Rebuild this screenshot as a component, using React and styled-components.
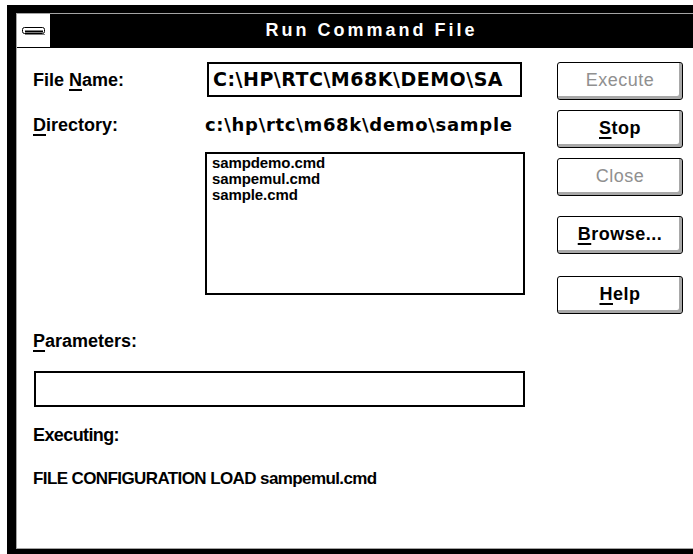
import React from "react";
import styled, { createGlobalStyle } from "styled-components";

const GlobalStyle = createGlobalStyle`
  html, body {
    margin: 0;
    padding: 0;
    background: #fff;
    overflow: hidden;
  }
  body {
    font-family: "Liberation Sans", Arial, sans-serif;
    font-weight: bold;
    color: #000;
  }
`;

const pathFont = `"DejaVu Sans", "Liberation Sans", sans-serif`;

const Frame = styled.div`
  margin: 5px 0 0 7px;
  width: 710px;
  background: #000;
  padding: 8px 9px 9px 9px;
`;

const Panel = styled.div`
  border: 1px solid #a4a4a4;
  background: #fff;
`;

const TitleBar = styled.div`
  display: flex;
  height: 33px;
  background: #000;
  border-bottom: 1px solid #000;
`;

const SysMenu = styled.div`
  width: 33px;
  background: #fff;
  display: flex;
  align-items: center;
  justify-content: center;
`;

const Title = styled.div`
  flex: 1;
  color: #fff;
  font-size: 18px;
  letter-spacing: 3px;
  line-height: 33px;
  padding-right: 32px;
  text-align: center;
`;

const Client = styled.div`
  display: flex;
  height: 500px;
`;

const LeftPane = styled.div`
  width: 508px;
  padding-left: 16px;
  box-sizing: border-box;
  display: flex;
  flex-direction: column;
`;

const Row = styled.div`
  display: flex;
  align-items: center;
  margin-top: ${(p) => p.$top}px;
  height: ${(p) => p.$h || 20}px;
`;

const Label = styled.div`
  font-size: ${(p) => p.$size || 18}px;
  line-height: 20px;
  width: ${(p) => p.$w || "auto"};
  letter-spacing: ${(p) => p.$ls || 0}px;
  flex: none;
  white-space: nowrap;
  margin-top: ${(p) => p.$top || 0}px;
`;

const PathText = styled.div`
  font-family: ${pathFont};
  font-size: 18px;
  line-height: 20px;
  letter-spacing: 0.7px;
  white-space: nowrap;
`;

const Key = styled.span`
  text-decoration: underline;
  text-underline-offset: 3px;
  text-decoration-thickness: 2px;
`;

const TextBox = styled.div`
  box-sizing: border-box;
  width: ${(p) => p.$w}px;
  height: ${(p) => p.$h}px;
  margin-top: ${(p) => p.$top || 0}px;
  margin-left: ${(p) => p.$left || 0}px;
  border: 2px solid #000;
  padding: 0 4px;
  font-family: ${pathFont};
  font-size: 19px;
  line-height: ${(p) => p.$h - 4}px;
  letter-spacing: 0.5px;
  white-space: nowrap;
  overflow: hidden;
`;

const ListBox = styled.div`
  box-sizing: border-box;
  width: 320px;
  height: 143px;
  margin: 17px 0 0 172px;
  border: 2px solid #000;
  padding: 1px 5px;
`;

const Item = styled.div`
  font-size: 15px;
  line-height: 16px;
  letter-spacing: -0.1px;
`;

const ButtonColumn = styled.div`
  margin-left: 32px;
  padding-top: 14px;
  display: flex;
  flex-direction: column;
  width: 126px;
`;

const Button = styled.div`
  box-sizing: border-box;
  height: 38px;
  margin-top: ${(p) => p.$top || 0}px;
  border: 1px solid #000;
  border-radius: 3px;
  background: #fff;
  box-shadow: inset -3px -3px 0 #a8a8a8, inset 2px 2px 0 #fff;
  display: flex;
  align-items: center;
  justify-content: center;
  font-size: 18px;
  color: ${(p) => (p.$disabled ? "#909090" : "#000")};
  font-weight: ${(p) => (p.$disabled ? "normal" : "bold")};
  letter-spacing: 0.5px;
  padding-bottom: 2px;
`;

function SysMenuIcon() {
  return (
    <svg width="24" height="8" viewBox="0 0 24 8">
      <rect x="0.5" y="0.5" width="22" height="6" rx="2" fill="#fff" stroke="#000" />
      <line x1="3" y1="4.5" x2="21" y2="4.5" stroke="#000" strokeWidth="2" />
      <line x1="3" y1="7.5" x2="23" y2="7.5" stroke="#808080" strokeWidth="1" />
    </svg>
  );
}

export default function App() {
  return (
    <>
      <GlobalStyle />
      <Frame>
        <Panel>
          <TitleBar>
            <SysMenu>
              <SysMenuIcon />
            </SysMenu>
            <Title>Run Command File</Title>
          </TitleBar>
          <Client>
            <LeftPane>
              <Row $top={14} $h={35}>
                <Label $w="174px">
                  File <Key>N</Key>ame:
                </Label>
                <TextBox $w={315} $h={35}>C:\HP\RTC\M68K\DEMO\SA</TextBox>
              </Row>
              <Row $top={18}>
                <Label $w="172px">
                  <Key>D</Key>irectory:
                </Label>
                <PathText>c:\hp\rtc\m68k\demo\sample</PathText>
              </Row>
              <ListBox>
                <Item>sampdemo.cmd</Item>
                <Item>sampemul.cmd</Item>
                <Item>sample.cmd</Item>
              </ListBox>
              <Label $top={36}>
                <Key>P</Key>arameters:
              </Label>
              <TextBox $w={491} $h={36} $top={20} $left={1} />
              <Label $top={18} $ls={-0.6}>
                Executing:
              </Label>
              <Label $top={24} $size={17} $ls={-0.6}>
                FILE CONFIGURATION LOAD sampemul.cmd
              </Label>
            </LeftPane>
            <ButtonColumn>
              <Button $disabled>Execute</Button>
              <Button $top={10}>
                <Key>S</Key>top
              </Button>
              <Button $top={10} $disabled>
                Close
              </Button>
              <Button $top={20}>
                <Key>B</Key>rowse...
              </Button>
              <Button $top={22}>
                <Key>H</Key>elp
              </Button>
            </ButtonColumn>
          </Client>
        </Panel>
      </Frame>
    </>
  );
}
